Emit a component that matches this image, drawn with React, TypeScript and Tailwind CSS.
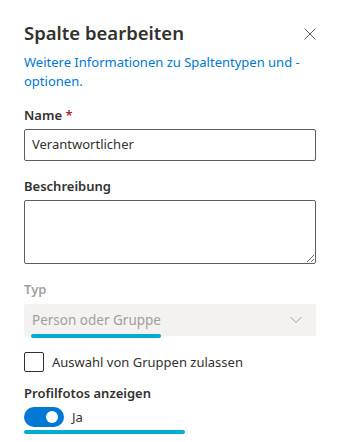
const font = { fontFamily: '"Segoe UI", "Noto Sans", sans-serif' };

export default function App() {
    return (
        <div className="w-[338px] h-[442px] bg-white text-[#323130] overflow-hidden" style={font}>
            <div className="pl-6 pr-[22px] pt-[19px]">
                {/* Header */}
                <div className="flex items-start justify-between">
                    <h1 className="text-[18.5px] leading-[28px] font-semibold">Spalte bearbeiten</h1>
                    <svg className="mt-[9px]" width="12" height="12" viewBox="0 0 12 12">
                        <path d="M0.5 0.5 L11.5 11.5 M11.5 0.5 L0.5 11.5" stroke="#605e5c" strokeWidth="1" />
                    </svg>
                </div>
                <p className="mt-[6px] text-[13px] leading-[19px] text-[#0078d4]">
                    Weitere Informationen zu Spaltentypen und -<br />optionen.
                </p>

                {/* Name */}
                <div className="mt-[14px]">
                    <label className="block text-[13px] leading-[20px] font-semibold">
                        Name <span className="text-[#a4262c]">*</span>
                    </label>
                    <div className="mt-[4px] h-[32px] border border-[#605e5c] rounded-[2px] flex items-center px-[7px] text-[13px]">
                        Verantwortlicher
                    </div>
                </div>

                {/* Beschreibung */}
                <div className="mt-[15px]">
                    <label className="block text-[13px] leading-[20px] font-semibold">Beschreibung</label>
                    <textarea
                        className="mt-[4px] block w-full h-[64px] border border-[#605e5c] rounded-[2px] resize-y outline-none"
                        defaultValue=""
                    />
                </div>

                {/* Typ */}
                <div className="mt-[15px]">
                    <label className="block text-[13px] leading-[20px] font-semibold text-[#a19f9d]">Typ</label>
                    <div className="relative mt-[5px]">
                        <div className="h-[32px] bg-[#f3f2f1] rounded-[2px] flex items-center justify-between pl-[8px] pr-[14px] text-[13.5px] text-[#a19f9d]">
                            <span>Person oder Gruppe</span>
                            <svg width="12" height="8" viewBox="0 0 12 8">
                                <path d="M0.5 1 L6 6.5 L11.5 1" stroke="#a19f9d" strokeWidth="1" fill="none" />
                            </svg>
                        </div>
                        <div className="absolute left-[7px] top-[30px] w-[130px] h-[4px] rounded-full bg-[#00acd2]" />
                    </div>
                </div>

                {/* Checkbox */}
                <div className="mt-[16px] flex items-center gap-[8px]">
                    <div className="w-[20px] h-[20px] border border-[#323130] rounded-[2px]" />
                    <span className="text-[13px] leading-[20px]">Auswahl von Gruppen zulassen</span>
                </div>

                {/* Toggle */}
                <div className="mt-[11px]">
                    <label className="block text-[13px] leading-[20px] font-semibold">Profilfotos anzeigen</label>
                    <div className="relative mt-[4px] flex items-center gap-[8px]">
                        <div className="w-[40px] h-[20px] rounded-full bg-[#0078d4] flex items-center justify-end pr-[6px]">
                            <div className="w-[12px] h-[12px] rounded-full bg-white" />
                        </div>
                        <span className="text-[13px] leading-[20px]">Ja</span>
                        <div className="absolute left-0 top-[23px] w-[161px] h-[4px] rounded-full bg-[#00acd2]" />
                    </div>
                </div>
            </div>
        </div>
    );
}
